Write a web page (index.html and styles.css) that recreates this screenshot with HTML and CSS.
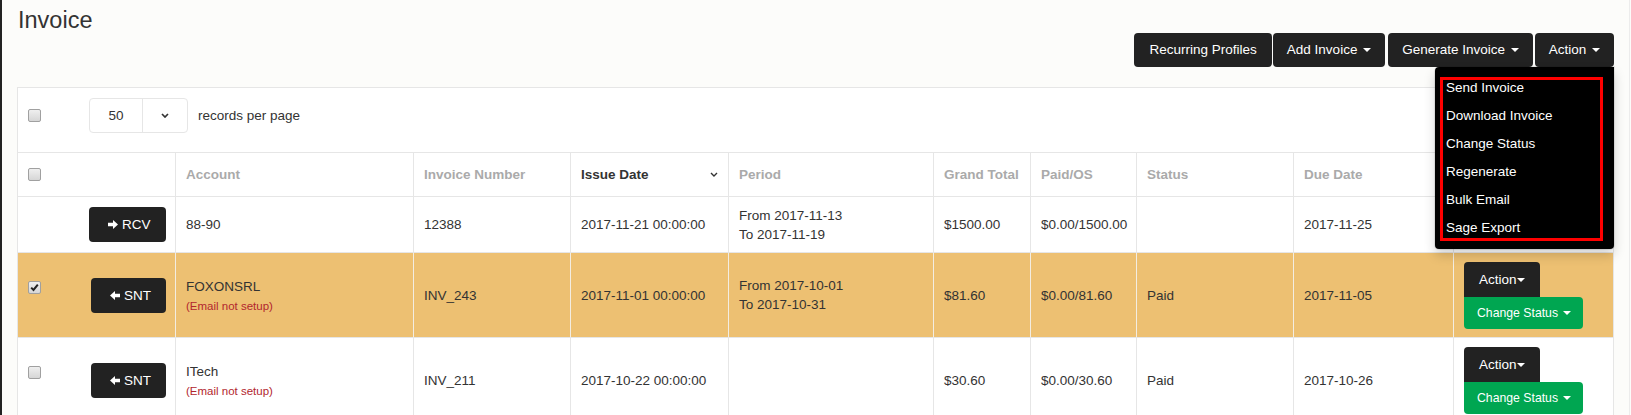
FILE: index.html
```html
<!DOCTYPE html>
<html lang="en">
<head>
<meta charset="utf-8">
<title>Invoice</title>
<link rel="stylesheet" href="styles.css">
</head>
<body>
<div class="page">
  <h1 class="title">Invoice</h1>
  <div class="toolbar">
    <button class="btn wide">Recurring Profiles</button>
    <button class="btn gap1">Add Invoice <span class="caret"></span></button>
    <button class="btn gap3">Generate Invoice <span class="caret"></span></button>
    <div class="dd">
      <button class="btn">Action <span class="caret"></span></button>
      <ul class="dd-menu">
        <li>Send Invoice</li>
        <li>Download Invoice</li>
        <li>Change Status</li>
        <li>Regenerate</li>
        <li>Bulk Email</li>
        <li>Sage Export</li>
        <li class="annot" aria-hidden="true"></li>
      </ul>
    </div>
  </div>

  <div class="panel">
    <div class="bar">
      <span class="cb"></span>
      <div class="sel">
        <div class="sel-val">50</div>
        <div class="sel-arrow"><svg width="8" height="5" viewBox="0 0 8 5"><path d="M1 1L4 4L7 1" stroke="#333" stroke-width="1.7" fill="none"/></svg></div>
      </div>
      <span class="rpp">records per page</span>
    </div>

    <div class="row head">
      <div class="c1"><span class="cb"></span></div>
      <div>Account</div>
      <div>Invoice Number</div>
      <div class="sorted"><span>Issue Date</span><svg width="8" height="5" viewBox="0 0 8 5"><path d="M1 1L4 4L7 1" stroke="#333" stroke-width="1.4" fill="none"/></svg></div>
      <div>Period</div>
      <div>Grand Total</div>
      <div>Paid/OS</div>
      <div>Status</div>
      <div>Due Date</div>
      <div></div>
    </div>

    <div class="row r1">
      <div class="c1 end">
        <span class="tbtn rcv"><svg class="ico" width="10" height="9" viewBox="0 0 10 9"><path d="M0 2.8H5V0L10 4.5L5 9V6.2H0Z" fill="#fff"/></svg>RCV</span>
      </div>
      <div>88-90</div>
      <div>12388</div>
      <div>2017-11-21 00:00:00</div>
      <div class="period">From 2017-11-13<br>To 2017-11-19</div>
      <div>$1500.00</div>
      <div>$0.00/1500.00</div>
      <div></div>
      <div>2017-11-25</div>
      <div></div>
    </div>

    <div class="row r2 hl">
      <div class="c1">
        <span class="cb on"><svg width="11" height="11" viewBox="0 0 11 11"><path d="M2.2 5.6L4.5 7.9L8.8 2.6" stroke="#222" stroke-width="2" fill="none"/></svg></span>
        <span class="tbtn snt"><svg class="ico" width="10" height="9" viewBox="0 0 10 9"><path d="M10 2.8H5V0L0 4.5L5 9V6.2H10Z" fill="#fff"/></svg>SNT</span>
      </div>
      <div><div class="acct"><div class="name">FOXONSRL</div><div class="warn">(Email not setup)</div></div></div>
      <div>INV_243</div>
      <div>2017-11-01 00:00:00</div>
      <div class="period">From 2017-10-01<br>To 2017-10-31</div>
      <div>$81.60</div>
      <div>$0.00/81.60</div>
      <div>Paid</div>
      <div>2017-11-05</div>
      <div class="acts">
        <span class="abtn">Action<span class="caret"></span></span>
        <span class="gbtn">Change Status <span class="caret"></span></span>
      </div>
    </div>

    <div class="row r3">
      <div class="c1">
        <span class="cb"></span>
        <span class="tbtn snt"><svg class="ico" width="10" height="9" viewBox="0 0 10 9"><path d="M10 2.8H5V0L0 4.5L5 9V6.2H10Z" fill="#fff"/></svg>SNT</span>
      </div>
      <div><div class="acct"><div class="name">ITech</div><div class="warn">(Email not setup)</div></div></div>
      <div>INV_211</div>
      <div>2017-10-22 00:00:00</div>
      <div class="period"></div>
      <div>$30.60</div>
      <div>$0.00/30.60</div>
      <div>Paid</div>
      <div>2017-10-26</div>
      <div class="acts">
        <span class="abtn">Action<span class="caret"></span></span>
        <span class="gbtn">Change Status <span class="caret"></span></span>
      </div>
    </div>
  </div>
</div>
</body>
</html>
```

FILE: styles.css
```css
* { box-sizing: border-box; }
html, body { margin: 0; height: 415px; overflow: hidden; }
body {
  background: #fcfcfa;
  font-family: "Liberation Sans", Arial, sans-serif;
  font-size: 13.5px;
  color: #333;
}
.page {
  width: 1630px;
  height: 415px;
  border-left: 2px solid #222;
  border-right: 1px solid #ececec;
  padding: 0 15px 0 15px;
}
.title {
  margin: 0;
  padding: 7px 0 0 1px;
  font-size: 23.5px;
  line-height: 26px;
  font-weight: normal;
  color: #333;
}
.toolbar {
  display: flex;
  justify-content: flex-end;
  height: 34px;
}
.btn {
  font: inherit;
  color: #fff;
  background: #222;
  border: 0;
  border-radius: 4px;
  height: 34px;
  line-height: 34px;
  padding: 0 14px;
  margin: 0;
  white-space: nowrap;
}
.btn.wide { padding: 0 15px 0 16px; }
.gap1 { margin-left: 1px; }
.gap3 { margin-left: 3px; }
.caret {
  display: inline-block;
  width: 0;
  height: 0;
  margin-left: 2px;
  vertical-align: middle;
  border-top: 4px solid #fff;
  border-left: 4px solid transparent;
  border-right: 4px solid transparent;
}
.dd { position: relative; margin-left: 2px; }
.dd-menu {
  position: absolute;
  top: 100%;
  right: 0;
  width: 179px;
  margin: 0;
  padding: 7px 0;
  list-style: none;
  background: #000;
  border-radius: 4px 0 4px 4px;
  box-shadow: 0 6px 12px rgba(0,0,0,.18), 0 0 0 1px rgba(0,0,0,.08);
  z-index: 5;
}
.dd-menu li {
  height: 28px;
  line-height: 28px;
  padding-left: 11px;
  color: #fff;
  white-space: nowrap;
}
.dd-menu li.annot {
  position: absolute;
  left: 5px;
  top: 10px;
  width: 163px;
  height: 164px;
  padding: 0;
  border: 3px solid #f00;
}

.panel {
  margin-top: 20px;
  width: 1597px;
  border: 1px solid #e6e6e6;
  background: #fff;
}
.bar {
  display: flex;
  align-items: center;
  height: 64px;
  padding: 10px 10px 19px;
}
.cb {
  display: inline-flex;
  align-items: center;
  justify-content: center;
  width: 13px;
  height: 13px;
  border: 1px solid #a0a0a0;
  border-radius: 2px;
  background: linear-gradient(#efefef, #d6d6d6);
  flex: none;
}
.sel {
  display: flex;
  margin-left: 48px;
  width: 99px;
  height: 35px;
  border: 1px solid #e6e6e6;
  border-radius: 4px;
}
.sel-val {
  width: 53px;
  border-right: 1px solid #e6e6e6;
  display: flex;
  align-items: center;
  justify-content: center;
}
.sel-arrow {
  flex: 1;
  display: flex;
  align-items: center;
  justify-content: center;
}
.rpp { margin-left: 10px; }

.row {
  display: grid;
  grid-template-columns: 157px 238px 157px 158px 205px 97px 106px 157px 160px 160px;
  border-top: 1px solid #e6e6e6;
}
.row > div {
  border-left: 1px solid #e6e6e6;
  padding: 0 10px;
  display: flex;
  align-items: center;
  white-space: nowrap;
}
.row > div:first-child { border-left: 0; }
.head { height: 44px; }
.head > div { font-weight: bold; color: #aaa; }
.head > div.sorted { color: #333; justify-content: space-between; }
.r1 { height: 56px; }
.r2, .r3 { height: 85px; }
.hl { background: #edc072; }
.hl > div { border-left-color: #f3ede2; }

.row > div.c1 { justify-content: space-between; padding: 0 9px 0 10px; }
.row > div.c1.end { justify-content: flex-end; }
.r2 .cb, .r3 .cb { margin-bottom: 15px; }

.tbtn {
  display: flex;
  align-items: center;
  height: 35px;
  padding-left: 19px;
  background: #222;
  color: #fff;
  border-radius: 4px;
}
.rcv { width: 77px; }
.snt { width: 75px; }
.ico { margin-right: 4px; }

.period { line-height: 19px; }
.acct { padding-top: 3px; }
.name { line-height: 19px; }
.warn { font-size: 11.5px; line-height: 21px; color: #b2262e; }

.row > div.acts {
  flex-direction: column;
  align-items: flex-start;
  justify-content: center;
}
.abtn {
  display: block;
  width: 76px;
  height: 35px;
  line-height: 35px;
  padding-left: 15px;
  background: #222;
  color: #fff;
  border-radius: 4px 4px 0 0;
}
.abtn .caret { margin-left: 0; }
.gbtn {
  display: block;
  width: 119px;
  height: 32px;
  line-height: 32px;
  padding-left: 13px;
  font-size: 12.25px;
  background: #00a651;
  color: #fff;
  border-radius: 0 4px 4px 4px;
}
.gbtn .caret { margin-left: 2px; }
```
